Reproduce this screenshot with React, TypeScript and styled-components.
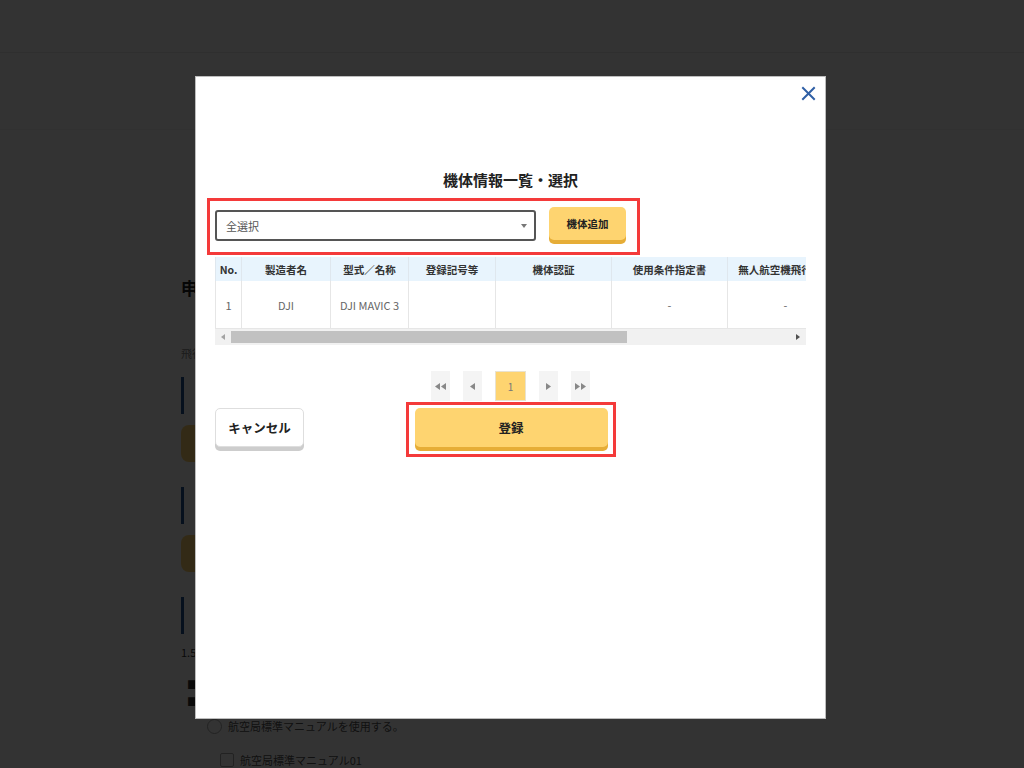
import styled, { createGlobalStyle } from "styled-components";

const GlobalStyle = createGlobalStyle`
  html, body {
    margin: 0;
    padding: 0;
  }
  body {
    font-family: "Noto Sans CJK JP", "Noto Sans", sans-serif;
    background: #fff;
    color: #333;
  }
`;

interface IColumn {
  label: string;
  width: number;
}
interface IMachine {
  no: number;
  maker: string;
  model: string;
  regNo: string;
  cert: string;
  conditions: string;
  logbook: string;
  extra: string;
}

const columns: IColumn[] = [
  { label: "No.", width: 26 },
  { label: "製造者名", width: 89 },
  { label: "型式／名称", width: 78 },
  { label: "登録記号等", width: 87 },
  { label: "機体認証", width: 116 },
  { label: "使用条件指定書", width: 116 },
  { label: "無人航空機飛行日誌", width: 116 },
  { label: "操作", width: 200 },
];

const machines: IMachine[] = [
  {
    no: 1,
    maker: "DJI",
    model: "DJI MAVIC 3",
    regNo: "",
    cert: "",
    conditions: "-",
    logbook: "-",
    extra: "",
  },
];

/* ---- page behind the dialog ---- */
const Page = styled.div`
  min-height: 768px;
  background: #fff;
`;
const Header = styled.header`
  height: 52px;
  border-bottom: 1px solid #e8e8e8;
`;
const SubBar = styled.div`
  height: 76px;
  border-bottom: 1px solid #f2f2f2;
  background: #fdfdfd;
`;
const Main = styled.main`
  display: flex;
  flex-direction: column;
  width: 660px;
  padding: 146px 0 0 181px;
`;
const PageTitle = styled.h1`
  margin: 0;
  font-size: 17px;
  line-height: 24px;
  font-weight: 700;
  color: #222;
`;
const PageNote = styled.p`
  margin: 46px 0 0;
  font-size: 11px;
  line-height: 14px;
  color: #888;
`;
const SectionBar = styled.div<{ $top: number }>`
  margin-top: ${(p) => p.$top}px;
  height: 37px;
  border-left: 3px solid #1f4f8f;
  padding-left: 12px;
  font-size: 14px;
  line-height: 37px;
  font-weight: 700;
`;
const PageButton = styled.div`
  margin-top: 11px;
  width: 220px;
  height: 37px;
  border-radius: 8px;
  background: #fdd36f;
`;
const PageText = styled.p<{ $top: number; $bold?: boolean; $indent?: number }>`
  margin: ${(p) => p.$top}px 0 0 ${(p) => p.$indent ?? 0}px;
  font-size: 11px;
  line-height: 14px;
  font-weight: ${(p) => (p.$bold ? 700 : 400)};
  color: #333;
`;
const ChoiceRow = styled.div<{ $top: number; $indent: number }>`
  display: flex;
  align-items: center;
  gap: 6px;
  margin: ${(p) => p.$top}px 0 0 ${(p) => p.$indent}px;
  font-size: 11px;
  color: #555;
`;
const Radio = styled.span`
  width: 13px;
  height: 13px;
  border: 1px solid #aaa;
  border-radius: 50%;
`;
const Check = styled.span`
  width: 12px;
  height: 12px;
  border: 1px solid #aaa;
  border-radius: 2px;
`;

/* ---- dialog ---- */
const Overlay = styled.div`
  position: fixed;
  inset: 0;
  display: flex;
  align-items: flex-start;
  padding: 76px 0 0 195px;
  background: rgba(0, 0, 0, 0.8);
`;
const Modal = styled.div`
  position: relative;
  box-sizing: border-box;
  display: flex;
  flex-direction: column;
  width: 631px;
  height: 643px;
  padding: 93px 19px 0;
  background: #fff;
  border: 1px solid #bdbdbd;
`;
const CloseButton = styled.button`
  position: absolute;
  top: 9px;
  right: 9px;
  display: flex;
  padding: 0;
  border: 0;
  background: none;
  cursor: pointer;
`;
const Title = styled.h2`
  margin: 0 0 8px;
  text-align: center;
  font-size: 15px;
  line-height: 20px;
  font-weight: 700;
  color: #222;
`;
const Highlight = styled.div`
  box-sizing: border-box;
  border: 3px solid #f43a3a;
`;
const Toolbar = styled(Highlight)`
  display: flex;
  align-items: center;
  gap: 13px;
  width: 433px;
  margin-left: -8px;
  padding: 6px 11px 8px 5px;
`;
const Select = styled.div`
  box-sizing: border-box;
  display: flex;
  align-items: center;
  justify-content: space-between;
  width: 321px;
  height: 31px;
  padding: 0 7px 0 9px;
  border: 2px solid #555;
  border-radius: 3px;
  font-size: 11px;
  color: #555;
`;
const Caret = styled.span`
  width: 0;
  height: 0;
  border-left: 3px solid transparent;
  border-right: 3px solid transparent;
  border-top: 4px solid #777;
`;
const YellowButton = styled.button<{ $w: number; $h: number; $size: number }>`
  width: ${(p) => p.$w}px;
  height: ${(p) => p.$h}px;
  margin-bottom: 4px;
  border: 0;
  border-radius: 5px;
  background: #fed470;
  box-shadow: 0 4px 0 #e6ad37;
  font-family: inherit;
  font-size: ${(p) => p.$size}px;
  font-weight: 700;
  color: #222;
  cursor: pointer;
`;
const TableWrap = styled.div`
  width: 591px;
  margin-top: 2px;
  overflow: hidden;
`;
const Table = styled.table`
  width: 828px;
  table-layout: fixed;
  border-collapse: collapse;
`;
const Th = styled.th`
  height: 24px;
  padding: 0;
  background: #e8f4fd;
  border-left: 1px solid #dfe7ee;
  font-size: 10.5px;
  font-weight: 700;
  color: #333;
  white-space: nowrap;
  text-align: center;
`;
const Td = styled.td`
  height: 47px;
  padding: 0;
  border-left: 1px solid #e6e6e6;
  border-bottom: 1px solid #e6e6e6;
  font-size: 11px;
  color: #666;
  text-align: center;
  white-space: nowrap;
`;
const Scrollbar = styled.div`
  display: flex;
  align-items: center;
  width: 591px;
  height: 16px;
  background: #f1f1f1;
`;
const ScrollArrow = styled.span<{ $dir: "left" | "right" }>`
  display: flex;
  align-items: center;
  justify-content: center;
  width: 16px;
  height: 16px;
  &::before {
    content: "";
    border-top: 3.5px solid transparent;
    border-bottom: 3.5px solid transparent;
    ${(p) =>
      p.$dir === "left"
        ? "border-right: 4px solid #a3a3a3;"
        : "border-left: 4px solid #505050;"}
  }
`;
const ScrollTrack = styled.div`
  flex: 1;
  height: 12px;
`;
const ScrollThumb = styled.div`
  width: 396px;
  height: 12px;
  background: #c1c1c1;
`;
const Pager = styled.nav`
  display: flex;
  justify-content: center;
  gap: 13px;
  margin-top: 26px;
`;
const PageItem = styled.span<{ $active?: boolean }>`
  box-sizing: border-box;
  display: flex;
  align-items: center;
  justify-content: center;
  gap: 1px;
  width: ${(p) => (p.$active ? 31 : 19)}px;
  height: 30px;
  background: ${(p) => (p.$active ? "#fed470" : "#f4f4f4")};
  border: 1px solid ${(p) => (p.$active ? "#e9e2cf" : "#f4f4f4")};
  font-size: 10px;
  color: #777;
`;
const Actions = styled.div`
  display: grid;
  grid-template-columns: 1fr auto 1fr;
  align-items: start;
  margin-top: 1px;
`;
const CancelButton = styled.button`
  justify-self: start;
  width: 89px;
  height: 39px;
  margin-top: 6px;
  border: 1px solid #dedede;
  border-radius: 5px;
  background: #fff;
  box-shadow: 0 4px 0 #cdcdcd;
  font-family: inherit;
  font-size: 12.5px;
  font-weight: 700;
  color: #222;
  cursor: pointer;
`;
const SubmitBox = styled(Highlight)`
  display: flex;
  padding: 3px 5px 3px 6px;
`;

function Tri({ dir }: { dir: "l" | "r" }) {
  return (
    <svg width="5" height="7" viewBox="0 0 5 7">
      <path d={dir === "l" ? "M5 0L0 3.5L5 7Z" : "M0 0L5 3.5L0 7Z"} fill="#888" />
    </svg>
  );
}

function App() {
  return (
    <>
      <GlobalStyle />
      <Page>
        <Header />
        <SubBar />
        <Main>
          <PageTitle>申請内容の入力</PageTitle>
          <PageNote>飛行に使用する機体・操縦者・飛行マニュアルを選択してください。</PageNote>
          <SectionBar $top={17}>機体情報</SectionBar>
          <PageButton />
          <SectionBar $top={25}>操縦者情報</SectionBar>
          <PageButton />
          <SectionBar $top={25}>飛行マニュアル</SectionBar>
          <PageText $top={11}>1.5 飛行マニュアル</PageText>
          <PageText $top={0} $indent={12}>（航空局標準マニュアル）</PageText>
          <PageText $top={4} $bold $indent={6}>■ 使用する飛行マニュアル</PageText>
          <PageText $top={3} $bold $indent={6}>■ 選択してください</PageText>
          <ChoiceRow $top={10} $indent={26}>
            <Radio />
            航空局標準マニュアルを使用する。
          </ChoiceRow>
          <ChoiceRow $top={18} $indent={39}>
            <Check />
            航空局標準マニュアル01
          </ChoiceRow>
        </Main>
      </Page>

      <Overlay>
        <Modal>
          <CloseButton aria-label="閉じる">
            <svg width="15" height="15" viewBox="0 0 15 15">
              <path
                d="M2 2L13 13M13 2L2 13"
                stroke="#2f5fa5"
                strokeWidth="2"
                strokeLinecap="square"
              />
            </svg>
          </CloseButton>
          <Title>機体情報一覧・選択</Title>

          <Toolbar>
            <Select>
              全選択
              <Caret />
            </Select>
            <YellowButton $w={77} $h={33} $size={10.5}>
              機体追加
            </YellowButton>
          </Toolbar>

          <TableWrap>
            <Table>
              <colgroup>
                {columns.map((c) => (
                  <col key={c.label} style={{ width: c.width }} />
                ))}
              </colgroup>
              <thead>
                <tr>
                  {columns.map((c) => (
                    <Th key={c.label}>{c.label}</Th>
                  ))}
                </tr>
              </thead>
              <tbody>
                {machines.map((m) => (
                  <tr key={m.no}>
                    <Td>{m.no}</Td>
                    <Td>{m.maker}</Td>
                    <Td>{m.model}</Td>
                    <Td>{m.regNo}</Td>
                    <Td>{m.cert}</Td>
                    <Td>{m.conditions}</Td>
                    <Td>{m.logbook}</Td>
                    <Td>{m.extra}</Td>
                  </tr>
                ))}
              </tbody>
            </Table>
          </TableWrap>
          <Scrollbar>
            <ScrollArrow $dir="left" />
            <ScrollTrack>
              <ScrollThumb />
            </ScrollTrack>
            <ScrollArrow $dir="right" />
          </Scrollbar>

          <Pager>
            <PageItem>
              <Tri dir="l" />
              <Tri dir="l" />
            </PageItem>
            <PageItem>
              <Tri dir="l" />
            </PageItem>
            <PageItem $active>1</PageItem>
            <PageItem>
              <Tri dir="r" />
            </PageItem>
            <PageItem>
              <Tri dir="r" />
              <Tri dir="r" />
            </PageItem>
          </Pager>

          <Actions>
            <CancelButton>キャンセル</CancelButton>
            <SubmitBox>
              <YellowButton $w={193} $h={39} $size={12.5}>
                登録
              </YellowButton>
            </SubmitBox>
          </Actions>
        </Modal>
      </Overlay>
    </>
  );
}
export default App;
